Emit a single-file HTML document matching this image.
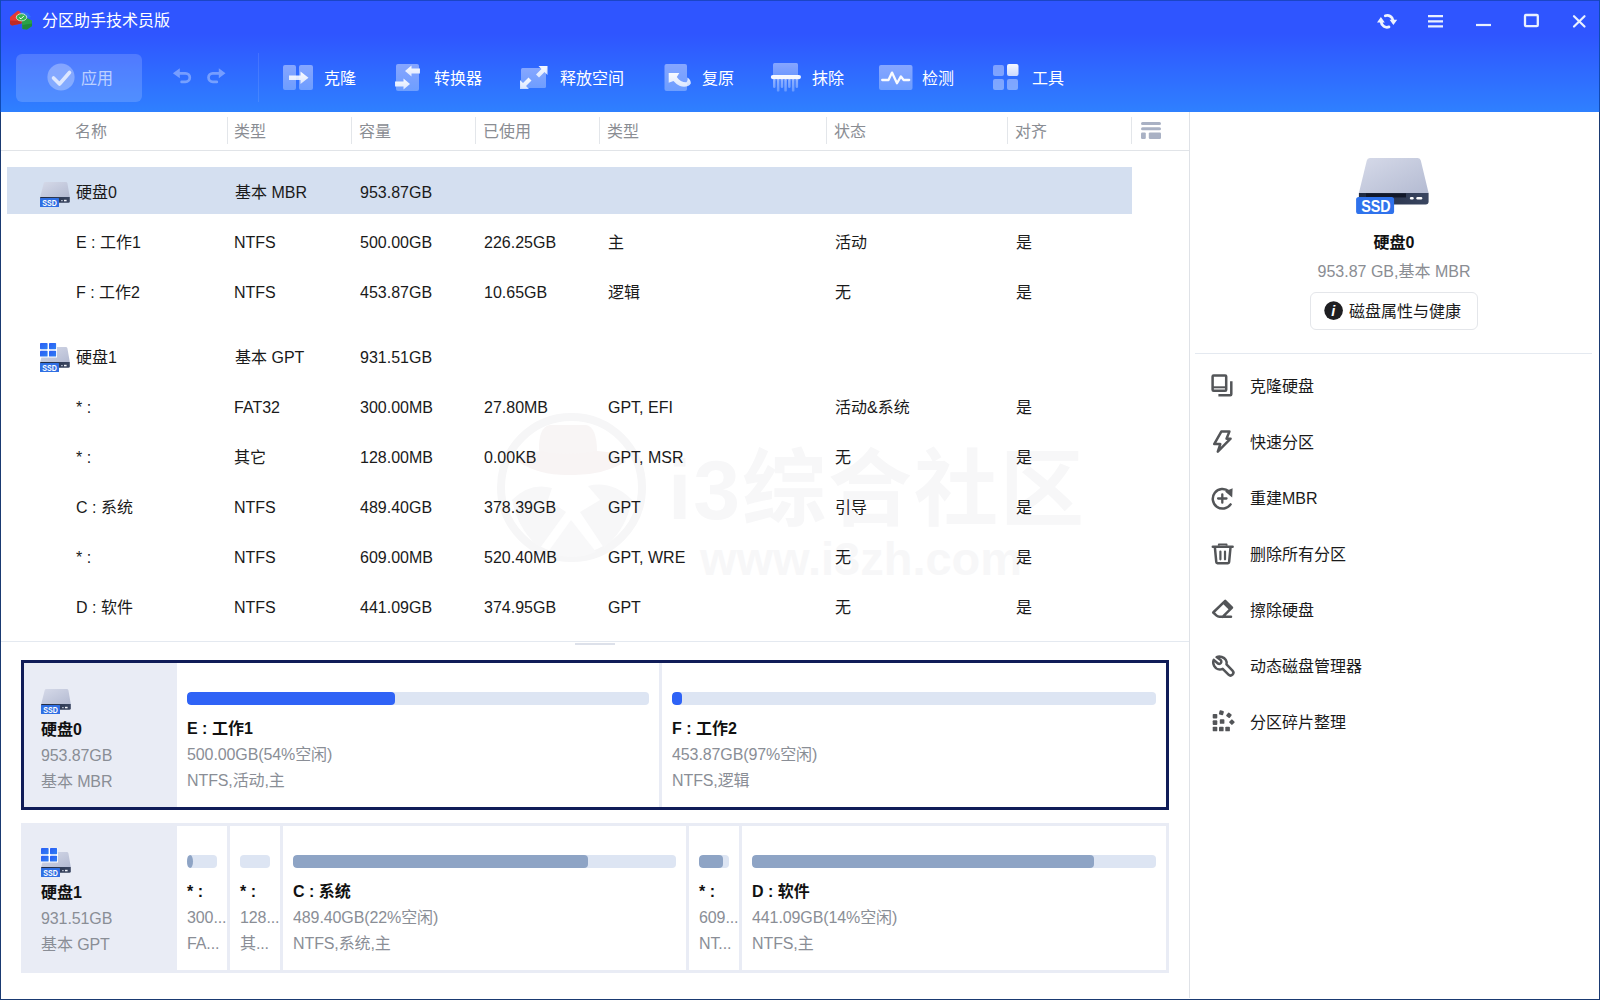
<!DOCTYPE html>
<html lang="zh-CN">
<head>
<meta charset="utf-8">
<title>分区助手技术员版</title>
<style>
*{box-sizing:border-box;margin:0;padding:0}
html,body{width:1600px;height:1000px;overflow:hidden;background:#fff}
body{font-family:"Liberation Sans","Noto Sans CJK SC",sans-serif;font-size:16px;color:#1a1a1a;position:relative}
.abs{position:absolute}
#win{position:absolute;left:0;top:0;width:1600px;height:1000px;overflow:hidden;background:#fff}
/* header */
#hdr{position:absolute;left:0;top:0;width:1600px;height:112px;background:linear-gradient(180deg,#2f55ff 0px,#2f55ff 34px,#2f80ff 112px)}
#title{position:absolute;left:42px;top:9px;height:24px;line-height:24px;font-size:16px;color:#fff;white-space:nowrap}
.tb{position:absolute;top:67px;height:24px;line-height:24px;font-size:16px;color:#fff;white-space:nowrap}
#apply{position:absolute;left:16px;top:54px;width:126px;height:48px;border-radius:6px;background:rgba(255,255,255,.16)}
/* frame borders */
#bt{position:absolute;left:0;top:0;width:1600px;height:1px;background:#1b45c6}
#bl{position:absolute;left:0;top:0;width:1px;height:1000px;background:linear-gradient(180deg,#0f4ab5 0,#0f4ab5 112px,#1a3a72 112px)}
#br{position:absolute;left:1599px;top:0;width:1px;height:1000px;background:linear-gradient(180deg,#0f4ab5 0,#0f4ab5 112px,#1a3a72 112px)}
#bb{position:absolute;left:0;top:999px;width:1600px;height:1px;background:#1a3a72}
/* table */
.th{position:absolute;top:120px;height:24px;line-height:24px;font-size:16px;color:#8a8d93;white-space:nowrap}
.vs{position:absolute;top:117px;width:1px;height:27px;background:#e3e6ea}
.row{position:absolute;left:0;width:1189px;height:24px;line-height:24px;white-space:nowrap;font-size:16px;color:#1a1a1a}
.row span{position:absolute;top:0}
.c1{left:76px}.c2{left:234px}.c3{left:360px}.c4{left:484px}.c5{left:608px}.c6{left:835px}.c7{left:1016px}
/* right panel */
.mi{position:absolute;left:1250px;height:24px;line-height:24px;font-size:16px;color:#1a1a1a;white-space:nowrap}
.ico{position:absolute;left:1210px;width:26px;height:26px}
/* disk cards */
.bar{position:absolute;height:13px;border-radius:4px;background:#dde5f3;overflow:hidden}
.bar i{position:absolute;left:0;top:0;height:13px;border-radius:4px;display:block}
.pn{position:absolute;height:24px;line-height:24px;font-size:16px;font-weight:bold;color:#111;white-space:nowrap}
.pg{position:absolute;height:24px;line-height:24px;font-size:16px;letter-spacing:-.1px;color:#8a8e96;white-space:nowrap;overflow:hidden}
.cell{position:absolute;background:#fff}
</style>
</head>
<body>
<div id="win">
<svg width="0" height="0" style="position:absolute">
  <defs>
    <linearGradient id="topg" x1="0" y1="0" x2="1" y2="1"><stop offset="0" stop-color="#d6dae9"/><stop offset="1" stop-color="#b4bbd2"/></linearGradient>
    <linearGradient id="frg" x1="0" y1="0" x2="1" y2="0"><stop offset="0" stop-color="#1f2940"/><stop offset="1" stop-color="#3a4661"/></linearGradient>
    <linearGradient id="wing" x1="0" y1="0" x2="1" y2="1"><stop offset="0" stop-color="#2a5cf6"/><stop offset="1" stop-color="#2f80f2"/></linearGradient>
    <symbol id="ssd" viewBox="0 0 30 25">
      <path d="M5.3 0 H25.8 Q27.1 0 27.4 1.3 L29.8 14.9 H0.2 L3.7 1.3 Q4 0 5.3 0 Z" fill="url(#topg)"/>
      <path d="M0.200 14.900 H29.800 V19.300 Q29.800 20.800 28.300 20.800 H0.200 Z" fill="url(#frg)"/>
      <rect x="21" y="18" width="1.800" height="1.200" fill="#a9b1c4"/>
      <rect x="24" y="17.800" width="2.600" height="1.500" fill="#f4f6fa"/>
      <rect x="0" y="16" width="19" height="9" rx=".6" fill="#2f6fe3"/>
      <text x="9.600" y="23.500" font-family="Liberation Sans, sans-serif" font-weight="bold" font-size="9.400" fill="#fff" text-anchor="middle" textLength="14.500" lengthAdjust="spacingAndGlyphs">SSD</text>
    </symbol>
    <symbol id="ssdbig" viewBox="0 0 74 57">
      <path d="M13.800 0.900 H61.800 Q64.300 0.900 64.800 3.400 L72.600 36.100 H2.900 L10.800 3.400 Q11.300 0.900 13.800 0.900 Z" fill="url(#topg)"/>
      <path d="M2.900 36.100 H72.600 V44.400 Q72.600 47.400 69.600 47.400 H2.900 Z" fill="url(#frg)"/>
      <rect x="10" y="36.400" width="40" height="4" fill="#121829"/>
      <rect x="53.900" y="39.900" width="3.800" height="2.600" rx="1.200" fill="#fff"/>
      <rect x="60.300" y="39.900" width="6" height="2.600" rx="1.200" fill="#fff"/>
      <rect x="0.100" y="39.900" width="38" height="17.200" rx="2.600" fill="#2f72ec"/>
      <text x="19.900" y="55" font-family="Liberation Sans, sans-serif" font-weight="bold" font-size="16.500" fill="#fff" text-anchor="middle" textLength="29.500" lengthAdjust="spacingAndGlyphs">SSD</text>
    </symbol>
    <symbol id="winlogo" viewBox="0 0 18 16">
      <rect x="0" y="0" width="18" height="16" fill="#fff" fill-opacity=".0"/>
      <rect x="-1" y="-1" width="18" height="15.500" fill="#fff"/>
      <rect x="0" y="0" width="7.600" height="6.300" rx=".7" fill="url(#wing)"/>
      <rect x="9" y="0" width="7.100" height="6.300" rx=".7" fill="url(#wing)"/>
      <rect x="0" y="7.800" width="7.600" height="5.800" rx=".7" fill="url(#wing)"/>
      <rect x="9" y="7.800" width="7.100" height="5.800" rx=".7" fill="url(#wing)"/>
    </symbol>
  </defs>
</svg>
<!-- HEADER -->
<div id="hdr">
  <div id="title">分区助手技术员版</div>
  <div id="apply"></div>
  <div class="tb" style="left:81px;opacity:.62">应用</div>
  <div class="abs" style="left:258px;top:53px;width:1px;height:49px;background:rgba(255,255,255,.10)"></div>
  <div class="tb" style="left:324px">克隆</div>
  <div class="tb" style="left:434px">转换器</div>
  <div class="tb" style="left:560px">释放空间</div>
  <div class="tb" style="left:702px">复原</div>
  <div class="tb" style="left:812px">抹除</div>
  <div class="tb" style="left:922px">检测</div>
  <div class="tb" style="left:1032px">工具</div>
  <!--HDRICONS_START-->
<svg class="abs" style="left:0;top:0" width="1600" height="112" viewBox="0 0 1600 112">
  <defs>
    <linearGradient id="wg" x1="0" y1="0" x2="0" y2="1"><stop offset="0" stop-color="#fff" stop-opacity=".42"/><stop offset="1" stop-color="#fff" stop-opacity=".3"/></linearGradient>
    <linearGradient id="wg3" gradientUnits="userSpaceOnUse" x1="0" y1="78" x2="0" y2="92"><stop offset="0" stop-color="#fff" stop-opacity=".5"/><stop offset="1" stop-color="#fff" stop-opacity=".25"/></linearGradient>
    <linearGradient id="wg2" x1="0" y1="0" x2="0" y2="1"><stop offset="0" stop-color="#fff" stop-opacity=".95"/><stop offset="1" stop-color="#fff" stop-opacity=".75"/></linearGradient>
  </defs>
  <!-- app logo -->
  <g>
    <path d="M10 17 L18 10.5 L20.5 12 L20.5 15 L17 17.5 L22 21 L21.5 23.5 L12 25.5 L10 24 Z" fill="#e63a34"/>
    <path d="M10 20.5 L21.5 21 L21.5 23.5 L12 25.5 L10 24 Z" fill="#c12a26"/>
    <path d="M20.5 11.5 L28 13 L31 17 L27 18 L22 15 Z" fill="#2f74f5"/>
    <path d="M22 21 L27 18 L32 20.5 L32 26 L27 29.5 L22.5 29 L22 25 Z" fill="#2aa148"/>
    <path d="M22.5 25 L32 23.5 L32 26 L27 29.5 L22.5 29 Z" fill="#1f8a3b"/>
    <ellipse cx="21.5" cy="17.3" rx="5.2" ry="3.6" fill="#35b353" stroke="#e8f6e6" stroke-width=".8"/>
    <path d="M19.3 17.6 L21 18.8 L24 15.8" fill="none" stroke="#fff" stroke-width="1"/>
  </g>
  <!-- window controls -->
  <g fill="none" stroke="#eef3ff" stroke-width="2.8" stroke-linecap="round">
    <path d="M1385.3 15.8 A5.8 5.8 0 0 1 1393 20.5"/>
    <path d="M1389 26.9 A5.8 5.8 0 0 1 1381.2 22"/>
  </g>
  <path d="M1389.6 19.8 H1397.2 L1393.4 25 Z M1377 22.5 H1384.8 L1380.9 17 Z" fill="#eef3ff"/>
  <g stroke="#e9f0ff" stroke-width="2" fill="none">
    <path d="M1428 16.2 H1443 M1428 21.3 H1443 M1428 26.4 H1443" stroke-width="2.2"/>
    <path d="M1476 25 H1491" stroke-width="2.200"/>
    <rect x="1525" y="15" width="12.800" height="11.200" rx="1" stroke-width="2.300"/>
    <path d="M1574 16.200 L1584.500 26.500 M1584.500 16.200 L1574 26.500" stroke-width="2.200" stroke-linecap="round"/>
  </g>
  <!-- apply -->
  <circle cx="61" cy="77" r="13.6" fill="#fff" fill-opacity=".3"/>
  <path d="M53.5 78 L59.5 84 L69.5 72.5" fill="none" stroke="#fff" stroke-opacity=".72" stroke-width="3.6" stroke-linecap="round" stroke-linejoin="round"/>
  <!-- undo / redo -->
  <g opacity=".34">
  <g fill="none" stroke="#fff" stroke-width="2.700">
    <path d="M179 73.300 H185.500 A4.300 4.300 0 0 1 185.500 81.900 H181.600" stroke-linecap="round"/>
    <path d="M219.500 73.300 H212.800 A4.300 4.300 0 0 0 212.800 81.900 H216.800" stroke-linecap="round"/>
  </g>
  <path d="M172.900 73.300 L179.800 68.300 V78.300 Z M225.500 73.300 L218.800 68.300 V78.300 Z" fill="#fff"/>
  </g>
  <!-- clone -->
  <rect x="283" y="65" width="13" height="25" rx="2" fill="url(#wg)"/>
  <rect x="299" y="65" width="14" height="25" rx="2" fill="url(#wg)"/>
  <path d="M289 75.5 H300.5 V71.5 L308.5 77.8 L300.5 84 V80 H289 Z" fill="url(#wg2)"/>
  <!-- convert -->
  <rect x="396" y="64" width="23" height="27" rx="2" fill="url(#wg)"/>
  <path d="M420 68.5 H411.5 V65.5 L405 71 L411.5 76.5 V73.5 H420 Z" fill="url(#wg2)"/>
  <path d="M395 81.5 H403.5 V78.5 L410 84 L403.5 89.5 V86.5 H395 Z" fill="url(#wg2)"/>
  <!-- release space -->
  <rect x="521" y="68" width="25" height="20" rx="1.500" fill="url(#wg)"/>
  <path d="M547.500 66 V75 L544.500 72 L539 77.500 L536 74.500 L541.500 69 L538.500 66 Z" fill="url(#wg2)"/>
  <path d="M520 89 V80 L523 83 L528.500 77.500 L531.500 80.500 L526 86 L529 89 Z" fill="url(#wg2)"/>
  <!-- restore -->
  <rect x="664.5" y="64" width="22.5" height="27" rx="2" fill="url(#wg)"/>
  <path d="M668.7 73 H679.3 L676.8 77 C679 80.5 683 82.5 686.5 82.3 C687.5 81 687.5 79 687.3 77.5 C690 79 691 81.5 690.8 83.5 C689 87 683.5 87.5 680 86 C677.5 85 675.5 83 673.5 81 L668.7 82.7 Z" fill="url(#wg2)"/>
  <!-- wipe -->
  <rect x="773" y="63" width="25" height="13" rx="1.500" fill="url(#wg)"/>
  <g fill="url(#wg3)">
    <rect x="773.0" y="79" width="2.500" height="9.0" rx="1.200"/>
    <rect x="776.9" y="79" width="2.500" height="12.6" rx="1.200"/>
    <rect x="780.7" y="79" width="2.500" height="9.0" rx="1.200"/>
    <rect x="784.3" y="79" width="2.500" height="12.6" rx="1.200"/>
    <rect x="788.1" y="79" width="2.500" height="9.0" rx="1.200"/>
    <rect x="791.9" y="79" width="2.500" height="12.6" rx="1.200"/>
    <rect x="795.6" y="79" width="2.500" height="9.0" rx="1.200"/>
  </g>
  <rect x="770.800" y="75" width="30.200" height="4.200" rx="2.100" fill="#fff" fill-opacity=".95"/>
  <!-- check -->
  <rect x="879" y="65" width="33.500" height="25" rx="2" fill="url(#wg)"/>
  <path d="M882.200 80 H888.500 L892 72.600 L897 83.200 L900.900 76.400 L903.600 80 H909.200" fill="none" stroke="#fff" stroke-opacity=".96" stroke-width="2.300" stroke-linejoin="round" stroke-linecap="round"/>
  <!-- tools -->
  <rect x="993" y="65" width="11" height="11" rx="2" fill="#fff" fill-opacity=".38"/>
  <rect x="1007" y="64" width="11.500" height="12" rx="2" fill="url(#wg2)"/>
  <rect x="993" y="79" width="11" height="11" rx="2" fill="#fff" fill-opacity=".38"/>
  <rect x="1007" y="79" width="11" height="11" rx="2" fill="#fff" fill-opacity=".38"/>
</svg>
<!--HDRICONS_END-->
</div>

<!-- TABLE HEADER -->
<div class="th" style="left:75px">名称</div>
<div class="th" style="left:234px">类型</div>
<div class="th" style="left:359px">容量</div>
<div class="th" style="left:483px">已使用</div>
<div class="th" style="left:607px">类型</div>
<div class="th" style="left:834px">状态</div>
<div class="th" style="left:1015px">对齐</div>
<div class="vs" style="left:227px"></div>
<div class="vs" style="left:351px"></div>
<div class="vs" style="left:475px"></div>
<div class="vs" style="left:599px"></div>
<div class="vs" style="left:826px"></div>
<div class="vs" style="left:1007px"></div>
<div class="vs" style="left:1131px"></div>
<div class="abs" style="left:1px;top:150px;width:1188px;height:1px;background:#e1e4e8"></div>
<div class="abs" style="left:1189px;top:112px;width:1px;height:886px;background:#dfe2e7"></div>
<svg class="abs" style="left:1140px;top:121px" width="22" height="19" viewBox="0 0 22 19"><g fill="#a9b1c4"><rect x="1" y="1" width="20" height="3" rx="1.500"/><rect x="1" y="6.200" width="20" height="3" rx="1.500"/><rect x="1" y="11.400" width="4.800" height="6.600" rx="1.200"/><rect x="8.800" y="11.400" width="12.200" height="6.600" rx="1.200"/></g></svg>


<!-- WATERMARK -->
<svg class="abs" style="left:490px;top:405px" width="165" height="165" viewBox="490 405 165 165">
  <circle cx="571.500" cy="487.500" r="70.500" fill="none" stroke="#f6f6f7" stroke-width="8"/>
  <path d="M539 452 Q538 427 550 425 H586 Q597 427 597 452 Q568 458 539 452 Z" fill="#f8f5f5"/>
  <path d="M519 462 Q524 452 540 451 Q568 457 597 451 Q620 452 626 462 Q600 476 571 475 Q540 476 519 462 Z" fill="#f8f4f4"/>
  <path d="M512 500 Q530 482 552 488 L548 500 L566 512 L540 548 Q518 530 512 500 Z" fill="#f7f7f8"/>
  <path d="M632 500 Q612 480 588 486 L600 500 L580 512 L604 548 Q626 530 632 500 Z" fill="#f7f7f8"/>
  <path d="M548 552 L571 520 L596 552 Q572 562 548 552 Z" fill="#f8f8f9"/>
</svg>
<div class="abs" style="left:668px;top:440px;height:100px;line-height:100px;font-size:84px;font-weight:bold;color:#f7f7f8;white-space:nowrap;letter-spacing:2px">i3综合社区</div>
<div class="abs" style="left:700px;top:529px;height:60px;line-height:60px;font-size:47px;font-weight:bold;color:#f7f7f8;white-space:nowrap">www.i3zh.com</div>
<!-- ROWS -->
<div class="abs" style="left:7px;top:167px;width:1125px;height:47px;background:#d4dff0"></div>
<div class="row" style="top:181px"><span class="c1">硬盘0</span><span class="c2" style="left:235px">基本 MBR</span><span class="c3">953.87GB</span></div>
<div class="row" style="top:231px"><span class="c1">E : 工作1</span><span class="c2">NTFS</span><span class="c3">500.00GB</span><span class="c4">226.25GB</span><span class="c5">主</span><span class="c6">活动</span><span class="c7">是</span></div>
<div class="row" style="top:281px"><span class="c1">F : 工作2</span><span class="c2">NTFS</span><span class="c3">453.87GB</span><span class="c4">10.65GB</span><span class="c5">逻辑</span><span class="c6">无</span><span class="c7">是</span></div>
<div class="row" style="top:346px"><span class="c1">硬盘1</span><span class="c2" style="left:235px">基本 GPT</span><span class="c3">931.51GB</span></div>
<div class="row" style="top:396px"><span class="c1">* :</span><span class="c2">FAT32</span><span class="c3">300.00MB</span><span class="c4">27.80MB</span><span class="c5">GPT, EFI</span><span class="c6">活动&amp;系统</span><span class="c7">是</span></div>
<div class="row" style="top:446px"><span class="c1">* :</span><span class="c2">其它</span><span class="c3">128.00MB</span><span class="c4">0.00KB</span><span class="c5">GPT, MSR</span><span class="c6">无</span><span class="c7">是</span></div>
<div class="row" style="top:496px"><span class="c1">C : 系统</span><span class="c2">NTFS</span><span class="c3">489.40GB</span><span class="c4">378.39GB</span><span class="c5">GPT</span><span class="c6">引导</span><span class="c7">是</span></div>
<div class="row" style="top:546px"><span class="c1">* :</span><span class="c2">NTFS</span><span class="c3">609.00MB</span><span class="c4">520.40MB</span><span class="c5">GPT, WRE</span><span class="c6">无</span><span class="c7">是</span></div>
<div class="row" style="top:596px"><span class="c1">D : 软件</span><span class="c2">NTFS</span><span class="c3">441.09GB</span><span class="c4">374.95GB</span><span class="c5">GPT</span><span class="c6">无</span><span class="c7">是</span></div>
<svg class="abs" style="left:40px;top:182px" width="30" height="25"><use href="#ssd"/></svg>
<svg class="abs" style="left:40px;top:347px" width="30" height="25"><use href="#ssd"/></svg>
<svg class="abs" style="left:40px;top:343.300px;overflow:visible" width="18" height="16"><use href="#winlogo"/></svg>


<!-- SPLITTER -->
<div class="abs" style="left:1px;top:641px;width:1188px;height:1px;background:#e4e9f0"></div>
<div class="abs" style="left:575px;top:643px;width:40px;height:2px;background:#dde1ea"></div>

<!-- DISK0 CARD -->
<div class="abs" style="left:21px;top:660px;width:1148px;height:150px;background:#101c58"></div>
<div class="abs" style="left:24px;top:663px;width:153px;height:144px;background:#e9ecf5"></div>
<div class="cell" style="left:177px;top:663px;width:482px;height:144px"></div>
<div class="abs" style="left:659px;top:663px;width:3px;height:144px;background:#e9ecf5"></div>
<div class="cell" style="left:662px;top:663px;width:504px;height:144px"></div>
<div class="pn" style="left:41px;top:718px">硬盘0</div>
<div class="pg" style="left:41px;top:744px">953.87GB</div>
<div class="pg" style="left:41px;top:770px">基本 MBR</div>
<div class="bar" style="left:187px;top:692px;width:462px"><i style="width:208px;background:#2f63f6"></i></div>
<div class="pn" style="left:187px;top:717px">E : 工作1</div>
<div class="pg" style="left:187px;top:743px">500.00GB(54%空闲)</div>
<div class="pg" style="left:187px;top:769px">NTFS,活动,主</div>
<div class="bar" style="left:672px;top:692px;width:484px"><i style="width:10px;background:#2f63f6"></i></div>
<div class="pn" style="left:672px;top:717px">F : 工作2</div>
<div class="pg" style="left:672px;top:743px">453.87GB(97%空闲)</div>
<div class="pg" style="left:672px;top:769px">NTFS,逻辑</div>

<!-- DISK1 CARD -->
<div class="abs" style="left:21px;top:823px;width:1148px;height:150px;background:#e9ecf5"></div>
<div class="cell" style="left:177px;top:826px;width:50px;height:144px"></div>
<div class="cell" style="left:230px;top:826px;width:50px;height:144px"></div>
<div class="cell" style="left:283px;top:826px;width:403px;height:144px"></div>
<div class="cell" style="left:689px;top:826px;width:50px;height:144px"></div>
<div class="cell" style="left:742px;top:826px;width:424px;height:144px"></div>
<div class="pn" style="left:41px;top:881px">硬盘1</div>
<div class="pg" style="left:41px;top:907px">931.51GB</div>
<div class="pg" style="left:41px;top:933px">基本 GPT</div>
<div class="bar" style="left:187px;top:855px;width:30px"><i style="width:5.500px;background:#8ea4c5;border-radius:50%"></i></div>
<div class="pn" style="left:187px;top:880px">* :</div>
<div class="pg" style="left:187px;top:906px;width:40px">300...</div>
<div class="pg" style="left:187px;top:932px;width:40px">FA...</div>
<div class="bar" style="left:240px;top:855px;width:30px"></div>
<div class="pn" style="left:240px;top:880px">* :</div>
<div class="pg" style="left:240px;top:906px;width:40px">128...</div>
<div class="pg" style="left:240px;top:932px;width:40px">其...</div>
<div class="bar" style="left:293px;top:855px;width:383px"><i style="width:295px;background:#8ea4c5"></i></div>
<div class="pn" style="left:293px;top:880px">C : 系统</div>
<div class="pg" style="left:293px;top:906px">489.40GB(22%空闲)</div>
<div class="pg" style="left:293px;top:932px">NTFS,系统,主</div>
<div class="bar" style="left:699px;top:855px;width:30px"><i style="width:24px;background:#8ea4c5"></i></div>
<div class="pn" style="left:699px;top:880px">* :</div>
<div class="pg" style="left:699px;top:906px;width:41px">609...</div>
<div class="pg" style="left:699px;top:932px;width:41px">NT...</div>
<div class="bar" style="left:752px;top:855px;width:404px"><i style="width:342px;background:#8ea4c5"></i></div>
<div class="pn" style="left:752px;top:880px">D : 软件</div>
<div class="pg" style="left:752px;top:906px">441.09GB(14%空闲)</div>
<div class="pg" style="left:752px;top:932px">NTFS,主</div>
<svg class="abs" style="left:41px;top:689px" width="30" height="25"><use href="#ssd"/></svg>
<svg class="abs" style="left:41px;top:852px" width="30" height="25"><use href="#ssd"/></svg>
<svg class="abs" style="left:41px;top:848.300px;overflow:visible" width="18" height="16"><use href="#winlogo"/></svg>


<!-- RIGHT PANEL -->
<div class="abs" style="left:1190px;top:231px;width:408px;height:24px;line-height:24px;text-align:center;font-size:16px;font-weight:bold;color:#111">硬盘0</div>
<div class="abs" style="left:1190px;top:260px;width:408px;height:24px;line-height:24px;text-align:center;font-size:16px;color:#8a8d93">953.87 GB,基本 MBR</div>
<div class="abs" style="left:1310px;top:292px;width:168px;height:38px;border:1px solid #e4e6ea;border-radius:6px;background:#fff"></div>
<div class="abs" style="left:1349px;top:300px;height:24px;line-height:24px;font-size:16px;color:#1a1a1a;white-space:nowrap">磁盘属性与健康</div>
<div class="abs" style="left:1195px;top:353px;width:397px;height:1px;background:#e4e9f0"></div>
<div class="mi" style="top:375px">克隆硬盘</div>
<div class="mi" style="top:431px">快速分区</div>
<div class="mi" style="top:487px">重建MBR</div>
<div class="mi" style="top:543px">删除所有分区</div>
<div class="mi" style="top:599px">擦除硬盘</div>
<div class="mi" style="top:655px">动态磁盘管理器</div>
<div class="mi" style="top:711px">分区碎片整理</div>
<svg class="abs" style="left:1356px;top:157px" width="74" height="57"><use href="#ssdbig"/></svg>
<svg class="abs" style="left:1200px;top:360px" width="50" height="390" viewBox="1200 360 50 390" fill="none" stroke="#535558" stroke-width="2.500" stroke-linejoin="round">
  <!-- clone disk -->
  <rect x="1212.600" y="375.600" width="13.600" height="15.200" rx="1"/>
  <path d="M1213 387.300 H1226" stroke-width="2"/>
  <path d="M1231.300 381.200 V394.200 Q1231.300 395.200 1230.300 395.200 H1218.400" stroke-linecap="butt"/>
  <!-- quick partition -->
  <path d="M1221.300 431.600 H1229.400 L1226.500 438.700 H1230.600 L1217.800 451.600 L1220.300 444.100 H1214.200 Z"/>
  <!-- rebuild mbr -->
  <path d="M1230.600 504.400 A9.800 9.800 0 1 1 1228.800 491.200" stroke-linecap="round"/>
  <path d="M1225 491.600 L1232.600 488.200 L1232.200 497.400 Z" fill="#535558" stroke="none"/>
  <path d="M1222.300 494.300 V502.700 M1218.100 498.500 H1226.500" stroke-linecap="round" stroke-width="2.300"/>
  <!-- delete all -->
  <path d="M1212.800 546.800 H1232.600" stroke-linecap="round"/>
  <path d="M1218.800 545.800 V544.300 H1226.600 V545.800" stroke-width="1.800"/>
  <path d="M1214.900 547.500 L1216.300 562.200 Q1216.400 563.200 1217.400 563.200 H1228 Q1229 563.200 1229.100 562.200 L1230.500 547.500"/>
  <path d="M1220.400 551.500 V559.300 M1225 551.500 V559.300" stroke-linecap="round" stroke-width="2.200"/>
  <!-- wipe disk -->
  <path d="M1231 616.800 H1219.400 Q1217.800 616.800 1216.600 615.700 L1213.200 612.500 L1225.200 600.800 L1232 607.600 L1222.600 616.800" stroke-linecap="round"/>
  <path d="M1224.300 602.200 L1230.700 608.500" stroke-width="4.200"/>
  <!-- dynamic disk manager: wrench -->
  <path d="M1216.600 657.100 C1220 655.900 1224 657.100 1225.800 659.900 C1226.800 661.500 1226.900 663.100 1226.500 664.400 L1232.500 670.600 A2.800 2.800 0 0 1 1228.500 674.600 L1222.700 668.800 C1219.500 670.300 1216 669.100 1214.300 666.100 C1213.100 664.100 1213 661.600 1213.800 659.900 L1218.200 663.700 C1219.500 664.400 1221 663.600 1221.300 662.100 C1221.500 661.100 1221.200 660.400 1220.600 659.900 Z"/>
  <!-- defrag -->
  <g fill="#535558" stroke="none">
    <rect x="1212.700" y="726.700" width="4.600" height="4.600" rx=".9"/>
    <rect x="1219" y="726.700" width="4.600" height="4.600" rx=".9"/>
    <rect x="1225.300" y="726.700" width="4.600" height="4.600" rx=".9"/>
    <rect x="1212.700" y="720.300" width="4.600" height="4.600" rx=".9"/>
    <rect x="1219.800" y="719.200" width="4.600" height="4.600" rx=".9"/>
    <rect x="1212.700" y="713.900" width="4.600" height="4.600" rx=".9"/>
    <rect x="1219.200" y="710.500" width="4.400" height="4.400" rx=".9" transform="rotate(15 1221.400 712.700)"/>
    <rect x="1226.700" y="713.100" width="4.400" height="4.400" rx=".9" transform="rotate(38 1228.900 715.300)"/>
    <rect x="1229.700" y="719.900" width="4.400" height="4.400" rx=".9" transform="rotate(45 1231.900 722.100)"/>
  </g>
</svg>
<svg class="abs" style="left:1324px;top:301px" width="20" height="20" viewBox="0 0 20 20"><circle cx="9.600" cy="9.600" r="9.300" fill="#1f1f22"/><text x="9.300" y="15" font-family="Liberation Sans, sans-serif" font-style="italic" font-weight="bold" font-size="14.500" fill="#fff" text-anchor="middle">i</text></svg>


<!-- window frame -->
<div id="bt"></div><div id="bl"></div><div id="br"></div><div id="bb"></div>
</div>
</body>
</html>
